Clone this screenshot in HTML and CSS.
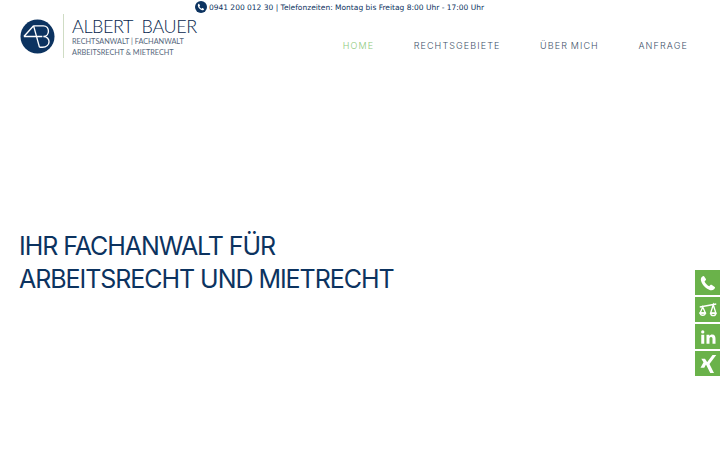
FILE: index.html
```html
<!DOCTYPE html>
<html lang="de">
<head>
  <meta charset="UTF-8">
  <title>Albert Bauer</title>
  <link rel="stylesheet" href="styles.css">
</head>
<body>

<!-- Top bar -->
<div class="topbar">
  <svg class="topbar-icon" viewBox="0 0 24 24">
    <circle cx="12" cy="12" r="12" fill="#0c3360"/>
    <path d="M8.200 5.500c-.5 0-1 .2-1.500.7-.9.9-1.200 2-1 3.300.5 3.700 4.400 8 8.300 9 1.400.3 2.600 0 3.500-.9.500-.5.700-1 .6-1.500l-3-2c-.4-.2-.8-.1-1.100.2l-1 1c-1.800-.8-3.400-2.500-4.200-4.300l1-1c.3-.3.400-.7.200-1.100z" fill="#fff"/>
  </svg>
  <span>0941 200 012 30 | Telefonzeiten: Montag bis Freitag 8:00 Uhr - 17:00 Uhr</span>
</div>

<header class="header">
  <a class="logo" href="#">
    <svg class="logo-mark" viewBox="0 0 36 36">
      <circle cx="18" cy="18" r="17.500" fill="#0c3360"/>
      <path d="M4 18 14 7M4 18h19M14 7l6 22M14 7h10c7 0 7 11 0 11 8 0 8 11-1 11h-3" fill="none" stroke="#fff" stroke-width="1.400"/>
    </svg>
    <div class="logo-text">
      <div class="logo-name">ALBERT&nbsp; BAUER</div>
      <div class="logo-sub">RECHTSANWALT | FACHANWALT</div>
      <div class="logo-sub">ARBEITSRECHT &amp; MIETRECHT</div>
    </div>
  </a>
  <nav class="nav">
    <a class="nav-link active" href="#">HOME</a>
    <a class="nav-link" href="#">RECHTSGEBIETE</a>
    <a class="nav-link" href="#">ÜBER MICH</a>
    <a class="nav-link" href="#">ANFRAGE</a>
  </nav>
</header>

<main class="hero">
  <h1>IHR FACHANWALT FÜR<br>ARBEITSRECHT UND MIETRECHT</h1>
</main>

<!-- Side buttons -->
<div class="side">
  <a class="side-btn" href="#">
    <svg viewBox="0 0 24 24"><path d="M6.500 2.500c-1 0-2 .5-2.800 1.400C2.500 5.300 2.200 7 2.700 9c1.300 5.500 6.800 11.200 12.300 12.500 2 .5 3.800.1 5.100-1.200.9-.8 1.300-1.800 1.300-2.700l-4.600-3.100c-.6-.3-1.200-.2-1.700.3l-1.500 1.500c-2.500-1.200-5-3.800-6.200-6.400l1.500-1.500c.5-.5.600-1.100.3-1.700z" fill="#fff"/></svg>
  </a>
  <a class="side-btn" href="#">
    <svg viewBox="0 0 24 24" fill="none" stroke="#fff" stroke-width="1.800"><path d="M1 8l22-4M5 8l-3.500 8h7zM19 5l-3.500 11h7z"/><path d="M1.500 16c.5 4 6.500 4 7 0zM15.500 16.500c.5 4 6.500 4 7 0z"/></svg>
  </a>
  <a class="side-btn" href="#">
    <svg viewBox="0 0 24 24"><path d="M3 9h4v12H3zM5 3a2.200 2.200 0 1 1 0 4.400A2.200 2.200 0 0 1 5 3zM10 9h3.800v1.700c.7-1.100 2-2 3.800-2 3.400 0 4.400 2.200 4.400 5.500V21h-4v-6c0-1.500-.3-2.900-2-2.900s-2 1.300-2 2.800V21h-4z" fill="#fff"/></svg>
  </a>
  <a class="side-btn" href="#">
    <svg viewBox="0 0 24 24"><path d="M18 0h5l-9 12 6 12h-5L9 12zM3 5h5l3 4.500L7 17H2l4-7.500z" fill="#fff"/></svg>
  </a>
</div>

</body>
</html>
```

FILE: styles.css
```css
body {
  margin: 0;
  height: 450px;
  overflow: hidden;
  background: #fff;
  color: #0c3360;
  font-family: 'Inter', sans-serif;
}

.topbar {
  display: flex;
  align-items: center;
  justify-content: center;
  gap: 2px;
  height: 14px;
  padding-right: 41px;
  font-family: 'DejaVu Sans', sans-serif;
  font-size: 7.500px;
  color: #0c3360;
}

.topbar-icon {
  width: 12px;
  height: 12px;
}

.header {
  display: flex;
  align-items: center;
  justify-content: space-between;
  padding: 0 32px 0 20px;
}

.logo {
  display: flex;
  align-items: center;
  color: inherit;
  text-decoration: none;
}

.logo-mark {
  width: 35px;
  height: 35px;
}

.logo-text {
  margin-left: 8px;
  padding-left: 8px;
  border-left: 1px solid #cfdcc4;
  height: 44px;
}

.logo-name {
  padding-top: 2px;
  font-family: 'Lato', sans-serif;
  font-size: 18px;
  font-weight: 300;
  line-height: 20px;
  letter-spacing: -0.4px;
  color: #06264d;
}

.logo-sub {
  font-family: 'Lato', sans-serif;
  font-size: 7.300px;
  line-height: 11px;
  color: #56677c;
}

.nav {
  display: flex;
  gap: 39.500px;
  padding-top: 18px;
}

.nav-link {
  font-family: 'Inter', sans-serif;
  font-size: 9px;
  font-weight: 300;
  letter-spacing: 1.120px;
  word-spacing: -1px;
  color: #3d5068;
  text-decoration: none;
}

.nav-link.active {
  color: #8cc97a;
}

.hero {
  margin-top: 172px;
  padding-left: 19px;
}

h1 {
  margin: 0;
  font-size: 25px;
  font-weight: 400;
  line-height: 33px;
  letter-spacing: -1.050px;
}

.side {
  position: fixed;
  right: 0;
  top: 270px;
  display: flex;
  flex-direction: column;
  gap: 2px;
}

.side-btn {
  display: flex;
  align-items: center;
  justify-content: center;
  width: 25px;
  height: 25px;
  background: #6ab24a;
}

.side-btn svg {
  width: 18px;
  height: 18px;
}
```
